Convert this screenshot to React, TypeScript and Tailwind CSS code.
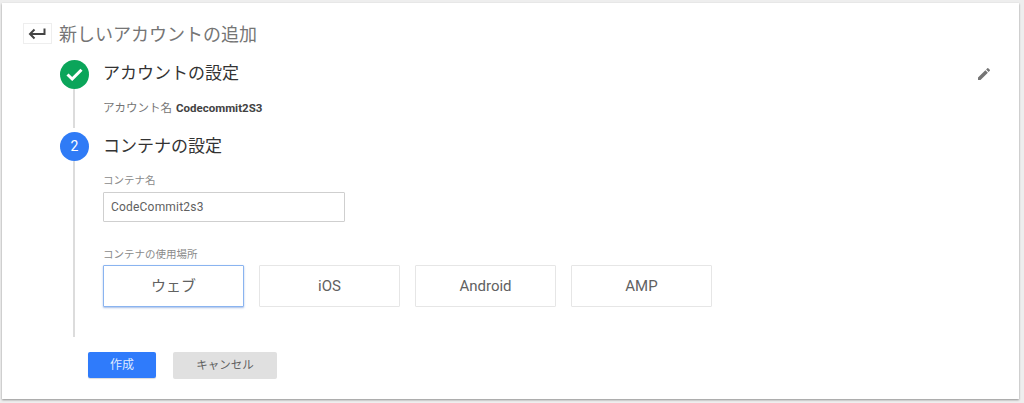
const font = { fontFamily: '"Roboto","Noto Sans CJK JP",sans-serif' };

function Tile({ label, active }: { label: string; active?: boolean }) {
  return (
    <div
      className={
        "w-[141px] h-[42px] flex items-center justify-center text-[15px] text-[#616161] bg-white rounded-[1px] " +
        (active
          ? "border border-[#8ab4f0] shadow-[0_1px_2px_rgba(60,110,200,0.45)]"
          : "border border-[#e6e6e6]")
      }
    >
      {label}
    </div>
  );
}

export default function App() {
  return (
    <div style={font} className="w-[1024px] h-[403px] bg-[#eeeeee] pt-[3px] pl-[2px] overflow-hidden">
      <div className="w-[1017px] h-[396px] bg-white shadow-[0_1px_2px_rgba(0,0,0,0.4)] pt-[20px] pl-[21px] pr-[27px]">
        <div className="flex items-center h-[21px]">
          <div className="w-[29px] h-[21px] border border-[#eeeeee] flex items-center justify-center">
            <svg width="19" height="12" viewBox="0 0 19 12" fill="none" stroke="#444444" strokeWidth="2">
              <path d="M16.5 0.5V6H2" />
              <path d="M6.5 1.5L2 6L6.5 10.5" />
            </svg>
          </div>
          <span className="ml-[7px] text-[18px] text-[#757575] leading-[21px] relative top-[1px]">新しいアカウントの追加</span>
        </div>

        <div className="flex ml-[37px] mt-[16px]">
          <div className="w-[29px] flex flex-col">
            <div className="w-[29px] h-[29px] rounded-full bg-[#0ba55a] flex items-center justify-center shrink-0">
              <svg width="17" height="13" viewBox="0 0 17 13" fill="none" stroke="#ffffff" strokeWidth="3">
                <path d="M1.5 6.5L6.2 11L15.5 1.7" />
              </svg>
            </div>
            <div className="ml-[13px] w-[2px] h-[39px] bg-[#dcdcdc] shrink-0" />
            <div className="h-[4px] shrink-0" />
            <div className="w-[29px] h-[29px] rounded-full bg-[#2f7bf6] text-white text-[14px] flex items-center justify-center shrink-0">
              2
            </div>
            <div className="ml-[13px] w-[2px] h-[176px] bg-[#dcdcdc] shrink-0" />
          </div>

          <div className="ml-[14px] flex-1">
            <div className="flex items-center justify-between h-[28px]">
              <span className="text-[17px] text-[#333333]">アカウントの設定</span>
              <svg width="16" height="16" viewBox="0 0 24 24" fill="#757575" className="self-start mt-[6px]">
                <path d="M3 17.25V21h3.75L17.81 9.94l-3.75-3.75L3 17.25zM20.71 7.04a1 1 0 0 0 0-1.41l-2.34-2.34a1 1 0 0 0-1.41 0l-1.83 1.83 3.75 3.75 1.83-1.83z" />
              </svg>
            </div>
            <div className="mt-[12px] h-[16px] flex items-center text-[11.5px] text-[#757575] leading-[16px]">
              アカウント名
              <span className="ml-[4px] font-bold text-[#424242] text-[11.5px]">Codecommit2S3</span>
            </div>
            <div className="mt-[16px] h-[29px] flex items-center text-[17px] text-[#333333]">コンテナの設定</div>

            <div className="mt-[13px] text-[10.5px] text-[#8a8a8a] leading-[14px]">コンテナ名</div>
            <div className="mt-[4px] w-[242px] h-[30px] border border-[#cfcfcf] rounded-[1px] flex items-center pl-[7px] text-[12px] text-[#5f5f5f] tracking-[0.2px]">
              CodeCommit2s3
            </div>

            <div className="mt-[26px] text-[10.5px] text-[#8a8a8a] leading-[14px]">コンテナの使用場所</div>
            <div className="mt-[3px] flex gap-[15px]">
              <Tile label="ウェブ" active />
              <Tile label="iOS" />
              <Tile label="Android" />
              <Tile label="AMP" />
            </div>
          </div>
        </div>

        <div className="flex ml-[65px] mt-[15px] gap-[17px]">
          <div className="w-[68px] h-[26px] rounded-[2px] bg-[#2f7bfb] text-[#dfeaff] text-[12px] flex items-center justify-center shadow-[0_1px_1px_rgba(0,0,0,0.15)]">
            作成
          </div>
          <div className="w-[104px] h-[27px] rounded-[2px] bg-[#e0e0e0] text-[#616161] text-[11.5px] flex items-center justify-center">
            キャンセル
          </div>
        </div>
      </div>
    </div>
  );
}
